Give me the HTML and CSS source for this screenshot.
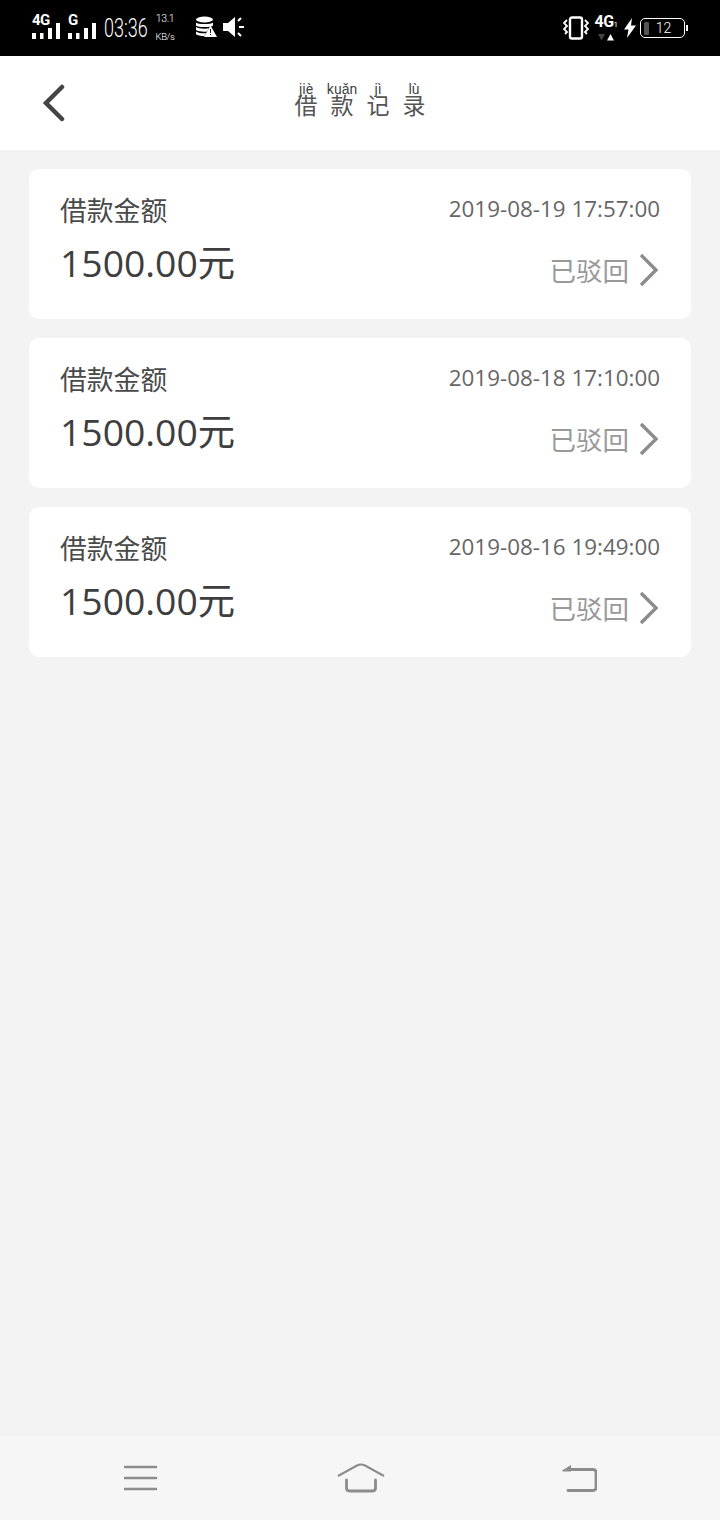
FILE: index.html
```html
<!DOCTYPE html>
<html lang="zh-CN">
<head>
    <meta charset="UTF-8" />
    <meta name="viewport" content="width=device-width, initial-scale=1.0" />
    <title>借款记录</title>
    <link rel="stylesheet" href="styles.css">
</head>
<body>
    <div class="phone">
        <!-- Status bar -->
        <div class="status-bar">
            <div class="status-left">
                <div class="signal signal-4g">
                    <span class="signal-label">4G</span>
                    <svg width="28" height="16" viewBox="0 0 28 16"><path d="M0 10h4v6H0zM8 10h3.500v6H8zM16 5h4v11h-4zM24 0h4v16h-4z" fill="#fff"/></svg>
                </div>
                <div class="signal signal-g">
                    <span class="signal-label">G</span>
                    <svg width="28" height="16" viewBox="0 0 28 16"><path d="M0 10h4v6H0zM8 10h3.500v6H8zM16 5h4v11h-4zM24 0h4v16h-4z" fill="#fff"/></svg>
                </div>
                <span class="clock">03:36</span>
                <div class="speed">
                    <span>13.1</span>
                    <span class="speed-unit">KB/s</span>
                </div>
                <svg class="data-icon" width="22" height="22" viewBox="0 0 22 22">
                    <ellipse cx="9.500" cy="3.500" rx="8.500" ry="3" fill="#fff"/>
                    <path d="M1 6.500c2 2 15 2 17 0v3c-2 2-15 2-17 0zM1 11c2 2 11 2 13 1.200l-2 3.300c-3 .5-9 0-11-1.500zM1 15.500c2 1.500 6 2 10 1.800L9.500 20C6 20 2 19.500 1 18z" fill="#fff"/>
                    <path d="M15.500 9.500L22 21H9z" fill="#fff"/>
                    <path d="M15 13h1l-.1 4h-.8zM15 18h1v1h-1z" fill="#000"/>
                </svg>
                <svg class="speaker-icon" width="23" height="22" viewBox="0 0 23 22">
                    <path d="M0 7h5l7-6v20l-7-6H0z" fill="#fff"/>
                    <path d="M15 5l3-3M16 11h5M15 17l3 3" stroke="#fff" stroke-width="2" fill="none"/>
                </svg>
            </div>
            <div class="status-right">
                <svg class="vibrate-icon" width="26" height="24" viewBox="0 0 26 24" fill="none" stroke="#fff">
                    <rect x="7" y="1.500" width="12" height="21" rx="2" stroke-width="2.400"/>
                    <path d="M4 4L1 7l3 3-3 3 3 3-2 2M22 4l3 3-3 3 3 3-3 3 2 2" stroke-width="1.800"/>
                </svg>
                <div class="net">
                    <span class="net-label">4G<small>1</small></span>
                    <svg width="16" height="7" viewBox="0 0 16 7"><path d="M0 0h7L3.500 6.500z" fill="#444"/><path d="M9 6.500h7L12.500 0z" fill="#fff"/></svg>
                </div>
                <svg class="bolt-icon" width="12" height="20" viewBox="0 0 12 20"><path d="M8 0L0 11.500h4.500L3 20l9-12.500H7z" fill="#fff"/></svg>
                <div class="battery">
                    <span class="battery-level"></span>
                    <span class="battery-text">12</span>
                </div>
                <span class="battery-nub"></span>
            </div>
        </div>

        <!-- Title bar -->
        <div class="title-bar">
            <svg class="back-icon" width="24" height="38" viewBox="0 0 24 38"><path d="M20 3L4 19l16 16" fill="none" stroke="#444" stroke-width="4.500" stroke-linecap="round"/></svg>
            <div class="title">
                <div class="title-char"><span class="pinyin">jiè</span><span class="hanzi">借</span></div>
                <div class="title-char"><span class="pinyin">kuǎn</span><span class="hanzi">款</span></div>
                <div class="title-char"><span class="pinyin">jì</span><span class="hanzi">记</span></div>
                <div class="title-char"><span class="pinyin">lù</span><span class="hanzi">录</span></div>
            </div>
        </div>

        <!-- Records -->
        <div class="records">
            <div class="record">
                <div class="record-top">
                    <span class="record-label">借款金额</span>
                    <span class="record-date">2019-08-19 17:57:00</span>
                </div>
                <div class="record-bottom">
                    <span class="record-amount">1500.00元</span>
                    <div class="record-status">
                        <span>已驳回</span>
                        <svg width="22" height="34" viewBox="0 0 22 34"><path d="M3 2l15 15L3 32" fill="none" stroke="#8c8c8c" stroke-width="3.400"/></svg>
                    </div>
                </div>
            </div>
            <div class="record">
                <div class="record-top">
                    <span class="record-label">借款金额</span>
                    <span class="record-date">2019-08-18 17:10:00</span>
                </div>
                <div class="record-bottom">
                    <span class="record-amount">1500.00元</span>
                    <div class="record-status">
                        <span>已驳回</span>
                        <svg width="22" height="34" viewBox="0 0 22 34"><path d="M3 2l15 15L3 32" fill="none" stroke="#8c8c8c" stroke-width="3.400"/></svg>
                    </div>
                </div>
            </div>
            <div class="record">
                <div class="record-top">
                    <span class="record-label">借款金额</span>
                    <span class="record-date">2019-08-16 19:49:00</span>
                </div>
                <div class="record-bottom">
                    <span class="record-amount">1500.00元</span>
                    <div class="record-status">
                        <span>已驳回</span>
                        <svg width="22" height="34" viewBox="0 0 22 34"><path d="M3 2l15 15L3 32" fill="none" stroke="#8c8c8c" stroke-width="3.400"/></svg>
                    </div>
                </div>
            </div>
        </div>

        <!-- Navigation bar -->
        <div class="nav-bar">
            <svg width="34" height="26" viewBox="0 0 34 26"><path d="M1 2h31M1 13h31M1 24h31" fill="none" stroke="#8c8c8c" stroke-width="2.600" stroke-linecap="round"/></svg>
            <svg class="home-icon" width="48" height="30" viewBox="0 0 48 30" fill="none" stroke="#8c8c8c"><path d="M1 13L20 2.500q4-2 8 0L47 13" stroke-width="2"/><path d="M9.500 17v8q0 3 3 3h23q3 0 3-3v-8" stroke-width="2.800" stroke-linecap="round"/></svg>
            <svg width="36" height="28" viewBox="0 0 36 28"><path d="M8 5.500h24q3 0 3 3v15q0 3-3 3H7" fill="none" stroke="#8c8c8c" stroke-width="2.800" stroke-linecap="round"/><path d="M1 6.500L10 1v6.500H2z" fill="#8c8c8c"/></svg>
        </div>
    </div>
</body>
</html>
```

FILE: styles.css
```css
body {
    margin: 0;
    background-color: #f3f3f3;
    font-family: "Open Sans", "Noto Sans CJK SC", sans-serif;
}

.phone {
    width: 720px;
    height: 1520px;
    display: flex;
    flex-direction: column;
    overflow: hidden;
}

/* Status bar */
.status-bar {
    height: 56px;
    flex-shrink: 0;
    background-color: #000;
    color: #fff;
    display: flex;
    justify-content: space-between;
    align-items: center;
    padding: 0 35px 0 32px;
    box-sizing: border-box;
    font-family: Roboto, sans-serif;
}

.status-left,
.status-right {
    display: flex;
    align-items: center;
}

.signal {
    width: 28px;
    display: flex;
    flex-direction: column;
    margin-right: 8px;
    position: relative;
    height: 26px;
    margin-top: -5px;
}

.signal svg {
    position: absolute;
    left: 0;
    bottom: 0;
}

.signal-label {
    font-size: 15px;
    font-weight: 700;
    line-height: 14px;
    letter-spacing: -0.5px;
}

.clock {
    width: 43px;
    font-size: 25px;
    font-weight: 300;
    margin-right: 8px;
    transform: scaleX(0.72);
    transform-origin: left center;
    white-space: nowrap;
}

.speed {
    width: 20px;
    display: flex;
    flex-direction: column;
    align-items: center;
    font-size: 10.500px;
    font-weight: 300;
    line-height: 10px;
    gap: 8px;
    letter-spacing: -0.4px;
    margin-right: 20px;
    margin-top: -1px;
}

.speed-unit {
    font-size: 9.500px;
}

.data-icon {
    margin-right: 6px;
    margin-top: -2px;
}

.speaker-icon {
    margin-top: -2px;
}

.vibrate-icon {
    margin-right: 6px;
}

.net {
    width: 22px;
    margin-right: 7px;
    display: flex;
    flex-direction: column;
    align-items: center;
    gap: 3px;
}

.net-label {
    font-size: 16px;
    font-weight: 700;
    line-height: 13px;
    letter-spacing: -0.5px;
}

.net-label small {
    font-size: 8px;
    font-weight: 400;
}

.bolt-icon {
    margin-right: 4px;
}

.battery {
    width: 45px;
    height: 20px;
    box-sizing: border-box;
    border: 1.500px solid #fff;
    border-radius: 5px;
    display: flex;
    align-items: center;
    padding-left: 3px;
    font-size: 14px;
    font-weight: 300;
}

.battery-level {
    width: 5px;
    height: 13px;
    background-color: #555;
    border-radius: 1px;
}

.battery-text {
    flex: 1;
    text-align: center;
    padding-right: 6px;
}

.battery-nub {
    width: 2px;
    height: 6px;
    background-color: #fff;
    margin-left: 1px;
    margin-right: -3px;
}

/* Title bar */
.title-bar {
    height: 94px;
    flex-shrink: 0;
    background-color: #fff;
    position: relative;
    display: flex;
    justify-content: center;
    align-items: center;
}

.back-icon {
    position: absolute;
    left: 42px;
    top: 28px;
}

.title {
    display: flex;
    margin-top: -7px;
}

.title-char {
    width: 36px;
    display: flex;
    flex-direction: column;
    align-items: center;
    color: #444;
}

.pinyin {
    font-family: Roboto, sans-serif;
    font-size: 14px;
    line-height: 14px;
    height: 10px;
    white-space: nowrap;
}

.hanzi {
    font-family: "Noto Sans CJK SC", sans-serif;
    font-weight: 400;
    font-size: 23px;
    line-height: 25px;
    color: #555;
}

/* Record cards */
.records {
    flex: 1;
    padding: 19px 29px 0;
    display: flex;
    flex-direction: column;
    gap: 19px;
}

.record {
    height: 150px;
    box-sizing: border-box;
    background-color: #fff;
    border-radius: 10px;
    padding: 20px 31px 0;
}

.record-top,
.record-bottom {
    display: flex;
    justify-content: space-between;
}

.record-top {
    align-items: center;
    height: 38px;
}

.record-label {
    font-size: 26.800px;
    font-family: "Noto Sans CJK SC", sans-serif;
    font-weight: 400;
    color: #4a4a4a;
    margin-top: 3px;
}

.record-date {
    font-size: 22.400px;
    color: #666;
}

.record-bottom {
    align-items: flex-start;
    margin-top: 12px;
}

.record-amount {
    font-size: 37.300px;
    color: #3e3e3e;
    line-height: 48px;
}

.record-status {
    display: flex;
    align-items: center;
    gap: 9px;
    font-size: 26.500px;
    font-family: "Noto Sans CJK SC", sans-serif;
    font-weight: 400;
    color: #999;
    margin-top: 11px;
}

/* Navigation bar */
.nav-bar {
    height: 84px;
    flex-shrink: 0;
    background-color: #f6f6f6;
    display: flex;
    justify-content: space-between;
    align-items: center;
    padding: 0 123px 0 124px;
}

.home-icon {
    margin-left: 2px;
}
```
